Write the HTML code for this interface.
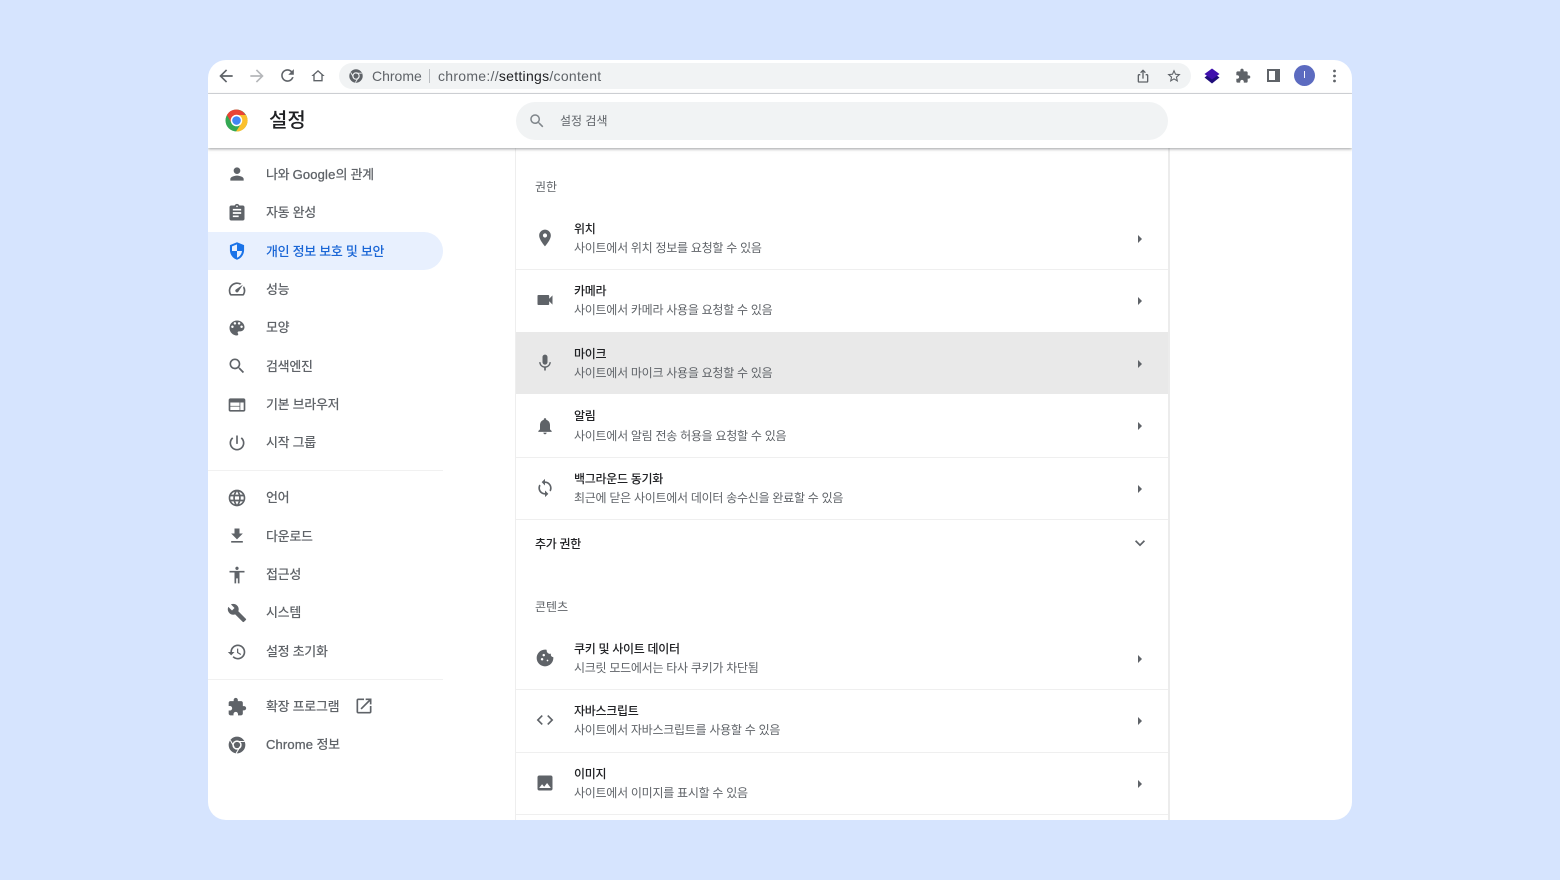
<!DOCTYPE html>
<html lang="ko"><head><meta charset="utf-8"><title>설정</title>
<style>
*{box-sizing:border-box;margin:0;padding:0}
html,body{width:1560px;height:880px;overflow:hidden;background:#d6e4fe}
body{font-family:"Liberation Sans","Noto Sans CJK KR",sans-serif;position:relative}
#w{position:absolute;left:208px;top:60px;width:1144px;height:760px;background:#fff;border-radius:18px;overflow:hidden;filter:blur(.3px)}
.a{position:absolute}
.t{position:absolute;line-height:20px;height:20px;white-space:nowrap}
svg{position:absolute;display:block}
.i{width:20px;height:20px;fill:#5f6368}
.s{font-size:13px;color:#5f6368;left:58px;font-weight:500;letter-spacing:-.3px;margin-top:1px}
.s b{font-weight:400;letter-spacing:.15px;-webkit-text-stroke:.3px currentColor}
.h{font-size:12px;color:#5f6368;left:327px;margin-top:1px}
.n{font-size:12px;color:#202124;left:366px;font-weight:500;letter-spacing:-.3px;margin-top:1px}
.d{font-size:12px;color:#5f6368;left:366px;letter-spacing:-.27px;margin-top:1px}
.l{position:absolute;left:308px;width:652px;height:1px;background:#efefef}
.ar{position:absolute;left:930px;width:4px;height:8px;background:#5f6368;clip-path:polygon(0 0,100% 50%,0 100%)}
.b{width:16px;height:16px;fill:#5f6368}
</style></head><body>
<div id="w">
<!-- toolbar -->
<svg style="left:8px;top:6px;width:20px;height:20px;fill:#5f6368" viewBox="0 0 24 24"><path d="M20 11H7.830l5.590-5.590L12 4l-8 8 8 8 1.410-1.410L7.830 13H20v-2z"/></svg>
<svg style="left:39px;top:6px;width:20px;height:20px;fill:#b5b7ba" viewBox="0 0 24 24"><path d="M12 4l-1.410 1.410L16.170 11H4v2h12.170l-5.580 5.590L12 20l8-8z"/></svg>
<svg style="left:70px;top:6px;width:19px;height:19px;fill:#5f6368" viewBox="0 0 24 24"><path d="M17.650 6.350C16.200 4.900 14.210 4 12 4c-4.420 0-7.990 3.580-7.990 8s3.570 8 7.990 8c3.730 0 6.840-2.550 7.730-6h-2.080c-.82 2.330-3.040 4-5.650 4-3.310 0-6-2.690-6-6s2.690-6 6-6c1.660 0 3.140.69 4.220 1.780L13 11h7V4l-2.350 2.350z"/></svg>
<svg style="left:102px;top:8px;width:16px;height:16px;fill:#5f6368" viewBox="0 0 24 24"><path d="M12 5.690l5 4.500V18H7v-7.810l5-4.500M12 3L2 12h3v8h14v-8h3L12 3z"/></svg>
<div class="a" style="left:131px;top:3px;width:852px;height:26px;background:#f1f3f4;border-radius:13px"></div>
<svg style="left:141px;top:9px;width:14px;height:14px" viewBox="0 0 24 24"><circle cx="12" cy="12" r="11.500" fill="#5f6368"/><circle cx="12" cy="12" r="6.400" fill="#f1f3f4"/><circle cx="12" cy="12" r="4.400" fill="#5f6368"/><path d="M12 7.200H22M7.800 14.400 2.800 5.800M16.200 14.400 11 23" stroke="#f1f3f4" stroke-width="1.500" fill="none"/></svg>
<div class="t" style="left:164px;top:6px;font-size:14px;color:#5f6368">Chrome</div>
<div class="a" style="left:221px;top:9px;width:1px;height:14px;background:#b9bcc0"></div>
<div class="t" style="left:230px;top:6px;font-size:14px;color:#5f6368;letter-spacing:.28px">chrome://<span style="color:#202124">settings</span>/content</div>
<svg class="b" style="left:927px;top:8px" viewBox="0 0 24 24"><path d="M12 2 7.700 6.300l1.400 1.400L11 5.800V16h2V5.800l1.900 1.900 1.400-1.400zM8 9H6c-1.100 0-2 .9-2 2v9c0 1.100.9 2 2 2h12c1.100 0 2-.9 2-2v-9c0-1.100-.9-2-2-2h-2v2h2v9H6v-9h2z"/></svg>
<svg class="b" style="left:958px;top:8px" viewBox="0 0 24 24"><path d="M22 9.240l-7.190-.62L12 2 9.190 8.630 2 9.240l5.460 4.730L5.820 21 12 17.270 18.180 21l-1.630-7.030L22 9.240zM12 15.400l-3.760 2.270 1-4.280-3.320-2.880 4.380-.38L12 6.100l1.710 4.040 4.380.38-3.320 2.880 1 4.280L12 15.400z"/></svg>
<svg style="left:996px;top:8px;width:16px;height:16px" viewBox="0 0 16 16"><path d="M.5 9.500 8 15.500l7.500-6L8 4z" fill="#1f0d7a"/><path d="M.5 6 8 .5 15.500 6 8 11.500z" fill="#3f10ad"/></svg>
<svg class="b" style="left:1027px;top:8px" viewBox="0 0 24 24"><path d="M20.500 11H19V7c0-1.100-.9-2-2-2h-4V3.500C13 2.120 11.880 1 10.500 1S8 2.120 8 3.500V5H4c-1.100 0-1.990.9-1.990 2v3.800H3.500c1.490 0 2.700 1.210 2.700 2.700s-1.210 2.700-2.700 2.700H2V20c0 1.100.9 2 2 2h3.800v-1.500c0-1.490 1.210-2.700 2.700-2.700 1.490 0 2.700 1.210 2.700 2.700V22H17c1.100 0 2-.9 2-2v-4h1.500c1.380 0 2.500-1.120 2.500-2.500S21.880 11 20.500 11z"/></svg>
<div class="a" style="left:1059px;top:9px;width:13px;height:13px;border:2px solid #5f6368;border-right-width:5px"></div>
<div class="a" style="left:1086px;top:5px;width:21px;height:21px;border-radius:50%;background:#5c6bc0;color:#fff;font-size:10px;line-height:21px;text-align:center">I</div>
<svg style="left:1124px;top:8px;width:5px;height:16px" viewBox="0 0 5 16" fill="#5f6368"><circle cx="2.500" cy="3" r="1.400"/><circle cx="2.500" cy="8" r="1.400"/><circle cx="2.500" cy="13" r="1.400"/></svg>
<div class="a" style="left:0;top:33px;width:1144px;height:1px;background:#dadce0"></div>

<!-- main card -->
<div class="a" style="left:306.500px;top:88px;width:1.500px;height:672px;background:#eeeeee"></div>
<div class="a" style="left:960px;top:88px;width:2px;height:672px;background:#ececec"></div>
<div class="a" style="left:308px;top:272px;width:652px;height:62px;background:#e9e9e9"></div>

<!-- header -->
<div class="a" style="left:0;top:34px;width:1144px;height:54px;background:#fff;box-shadow:0 1px 3px rgba(60,64,67,.5)"></div>
<svg style="left:17px;top:49px;width:23px;height:23px" viewBox="0 0 24 24"><circle cx="12" cy="12" r="11.500" fill="#34a853"/><path d="M12 .5A11.500 11.500 0 0 0 2 6.300L7 15 12 7h10A11.500 11.500 0 0 0 12 .5z" fill="#ea4335"/><path d="M22 6.300H12l5 8.700-5.500 8.500A11.500 11.500 0 0 0 22 6.300z" fill="#fbc02d"/><circle cx="12" cy="12" r="6" fill="#fff"/><circle cx="12" cy="12" r="4.500" fill="#4285f4"/></svg>
<div class="t" style="left:61px;top:47px;height:28px;line-height:28px;font-size:20px;color:#202124;font-weight:500">설정</div>
<div class="a" style="left:308px;top:42px;width:652px;height:38px;background:#f1f3f4;border-radius:19px"></div>
<svg style="left:319.500px;top:51.500px;width:18px;height:18px;fill:#80868b" viewBox="0 0 24 24"><path d="M15.500 14h-.79l-.28-.27C15.410 12.590 16 11.110 16 9.500 16 5.910 13.090 3 9.500 3S3 5.910 3 9.500 5.910 16 9.500 16c1.610 0 3.090-.59 4.230-1.570l.27.28v.79l5 4.990L20.490 19l-4.990-5zm-6 0C7.010 14 5 11.990 5 9.500S7.010 5 9.500 5 14 7.010 14 9.500 11.990 14 9.500 14z"/></svg>
<div class="t" style="left:352px;top:51px;font-size:12px;color:#5f6368">설정 검색</div>

<!-- sidebar -->
<div class="a" style="left:0;top:172px;width:235px;height:38px;background:#e8f0fe;border-radius:0 19px 19px 0"></div>
<div class="a" style="left:0;top:410px;width:235px;height:1px;background:#f1f1f1"></div>
<div class="a" style="left:0;top:619px;width:235px;height:1px;background:#f1f1f1"></div>

<svg class="i" style="left:19px;top:104px" viewBox="0 0 24 24"><path d="M12 12c2.210 0 4-1.790 4-4s-1.790-4-4-4-4 1.790-4 4 1.790 4 4 4zm0 2c-2.670 0-8 1.340-8 4v2h16v-2c0-2.660-5.330-4-8-4z"/></svg>
<div class="t s" style="top:104px">나와 <b>Google</b>의 관계</div>
<svg class="i" style="left:19px;top:143px" viewBox="0 0 24 24"><path d="M19 3h-4.180C14.400 1.840 13.300 1 12 1c-1.300 0-2.400.84-2.820 2H5c-1.100 0-2 .9-2 2v14c0 1.100.9 2 2 2h14c1.100 0 2-.9 2-2V5c0-1.100-.9-2-2-2zm-7 0c.55 0 1 .45 1 1s-.45 1-1 1-1-.45-1-1 .45-1 1-1zm2 14H7v-2h7v2zm3-4H7v-2h10v2zm0-4H7V7h10v2z"/></svg>
<div class="t s" style="top:142px">자동 완성</div>
<svg class="i" style="left:19px;top:181px;fill:#1a73e8" viewBox="0 0 24 24"><path d="M12 1.500 3.500 5v6c0 5.200 3.600 10 8.500 11.500 4.900-1.500 8.500-6.300 8.500-11.500V5z"/><path d="M12 4v8H6V6.400zM12 12h6c-.4 3.600-2.800 6.900-6 8.100z" fill="#e8f0fe"/></svg>
<div class="t s" style="top:181px;color:#1a66d6">개인 정보 보호 및 보안</div>
<svg class="i" style="left:19px;top:219px" viewBox="0 0 24 24"><path d="M20.380 8.570l-1.230 1.850a8 8 0 0 1-.22 7.580H5.070A8 8 0 0 1 15.580 6.850l1.850-1.230A10 10 0 0 0 3.350 19a2 2 0 0 0 1.720 1h13.850a2 2 0 0 0 1.740-1 10 10 0 0 0-.27-10.440zm-9.790 6.840a2 2 0 0 0 2.830 0l5.660-8.490-8.490 5.660a2 2 0 0 0 0 2.830z"/></svg>
<div class="t s" style="top:219px">성능</div>
<svg class="i" style="left:19px;top:258px" viewBox="0 0 24 24"><path d="M12 3c-4.970 0-9 4.030-9 9s4.030 9 9 9c.83 0 1.500-.67 1.500-1.500 0-.39-.15-.74-.39-1.010-.23-.26-.38-.61-.38-.99 0-.83.67-1.500 1.500-1.500H16c2.760 0 5-2.240 5-5 0-4.420-4.030-8-9-8zm-5.500 9c-.83 0-1.500-.67-1.500-1.500S5.670 9 6.500 9 8 9.670 8 10.500 7.330 12 6.500 12zm3-4C8.670 8 8 7.330 8 6.500S8.670 5 9.500 5s1.500.67 1.500 1.500S10.330 8 9.500 8zm5 0c-.83 0-1.500-.67-1.500-1.500S13.670 5 14.500 5s1.500.67 1.500 1.500S15.330 8 14.500 8zm3 4c-.83 0-1.500-.67-1.500-1.500S16.670 9 17.500 9s1.500.67 1.500 1.500-.67 1.500-1.500 1.500z"/></svg>
<div class="t s" style="top:257px">모양</div>
<svg class="i" style="left:19px;top:296px" viewBox="0 0 24 24"><path d="M15.500 14h-.79l-.28-.27C15.410 12.590 16 11.110 16 9.500 16 5.910 13.090 3 9.500 3S3 5.910 3 9.500 5.910 16 9.500 16c1.610 0 3.090-.59 4.230-1.570l.27.28v.79l5 4.990L20.490 19l-4.990-5zm-6 0C7.010 14 5 11.990 5 9.500S7.010 5 9.500 5 14 7.010 14 9.500 11.990 14 9.500 14z"/></svg>
<div class="t s" style="top:296px">검색엔진</div>
<svg class="i" style="left:19px;top:335px" viewBox="0 0 24 24"><path d="M20 4H4c-1.100 0-2 .9-2 2l-.01 12c0 1.100.9 2 2 2H20c1.100 0 2-.9 2-2V6c0-1.100-.9-2-2-2zm-5 14H4v-4h11v4zm0-5H4V9h11v4zm5 5h-4V9h4v9z"/></svg>
<div class="t s" style="top:334px">기본 브라우저</div>
<svg class="i" style="left:19px;top:373px" viewBox="0 0 24 24"><path d="M13 3h-2v10h2V3zm4.830 2.170l-1.420 1.420C17.990 7.860 19 9.810 19 12c0 3.870-3.130 7-7 7s-7-3.130-7-7c0-2.190 1.010-4.140 2.580-5.420L6.170 5.170C4.230 6.820 3 9.260 3 12c0 4.970 4.030 9 9 9s9-4.030 9-9c0-2.740-1.230-5.180-3.170-6.830z"/></svg>
<div class="t s" style="top:372px">시작 그룹</div>
<svg class="i" style="left:19px;top:428px" viewBox="0 0 24 24"><path d="M11.990 2C6.470 2 2 6.480 2 12s4.470 10 9.990 10C17.520 22 22 17.520 22 12S17.520 2 11.990 2zm6.930 6h-2.950c-.32-1.250-.78-2.450-1.380-3.560 1.840.63 3.370 1.910 4.330 3.560zM12 4.040c.83 1.200 1.480 2.530 1.910 3.960h-3.820c.43-1.430 1.080-2.760 1.910-3.960zM4.260 14C4.100 13.360 4 12.690 4 12s.1-1.360.26-2h3.380c-.08.66-.14 1.320-.14 2 0 .68.06 1.340.14 2H4.260zm.82 2h2.950c.32 1.250.78 2.450 1.380 3.560-1.840-.63-3.370-1.900-4.330-3.560zm2.950-8H5.080c.96-1.660 2.490-2.930 4.330-3.560C8.810 5.550 8.350 6.750 8.030 8zM12 19.960c-.83-1.200-1.480-2.530-1.910-3.960h3.820c-.43 1.430-1.080 2.760-1.910 3.960zM14.340 14H9.660c-.09-.66-.16-1.320-.16-2 0-.68.07-1.350.16-2h4.680c.09.65.16 1.320.16 2 0 .68-.07 1.340-.16 2zm.25 5.560c.6-1.110 1.060-2.310 1.380-3.560h2.950c-.96 1.650-2.490 2.930-4.330 3.560zM16.360 14c.08-.66.14-1.320.14-2 0-.68-.06-1.340-.14-2h3.380c.16.64.26 1.310.26 2s-.1 1.360-.26 2h-3.380z"/></svg>
<div class="t s" style="top:427px">언어</div>
<svg class="i" style="left:19px;top:466px" viewBox="0 0 24 24"><path d="M19 9h-4V3H9v6H5l7 7 7-7zM5 18v2h14v-2H5z"/></svg>
<div class="t s" style="top:466px">다운로드</div>
<svg class="i" style="left:19px;top:505px" viewBox="0 0 24 24"><path d="M12 2c1.100 0 2 .9 2 2s-.9 2-2 2-2-.9-2-2 .9-2 2-2zm9 7h-6v13h-2v-6h-2v6H9V9H3V7h18v2z"/></svg>
<div class="t s" style="top:504px">접근성</div>
<svg class="i" style="left:19px;top:543px" viewBox="0 0 24 24"><path d="M22.700 19l-9.100-9.100c.9-2.300.4-5-1.500-6.900-2-2-5-2.400-7.400-1.300L9 6 6 9 1.600 4.700C.4 7.100.9 10.100 2.900 12.100c1.900 1.900 4.600 2.400 6.900 1.500l9.100 9.100c.4.4 1 .4 1.400 0l2.300-2.300c.5-.4.5-1.100.1-1.400z"/></svg>
<div class="t s" style="top:542px">시스템</div>
<svg class="i" style="left:19px;top:582px" viewBox="0 0 24 24"><path d="M13 3c-4.970 0-9 4.030-9 9H1l3.890 3.890.07.14L9 12H6c0-3.870 3.130-7 7-7s7 3.130 7 7-3.130 7-7 7c-1.930 0-3.680-.79-4.940-2.060l-1.420 1.420C8.270 19.990 10.510 21 13 21c4.970 0 9-4.030 9-9s-4.030-9-9-9zm-1 5v5l4.280 2.540.72-1.210-3.500-2.080V8H12z"/></svg>
<div class="t s" style="top:581px">설정 초기화</div>
<svg class="i" style="left:19px;top:637px" viewBox="0 0 24 24"><path d="M20.500 11H19V7c0-1.100-.9-2-2-2h-4V3.500C13 2.120 11.880 1 10.500 1S8 2.120 8 3.500V5H4c-1.100 0-1.990.9-1.990 2v3.800H3.500c1.490 0 2.700 1.210 2.700 2.700s-1.210 2.700-2.700 2.700H2V20c0 1.100.9 2 2 2h3.800v-1.500c0-1.490 1.210-2.700 2.700-2.700 1.490 0 2.700 1.210 2.700 2.700V22H17c1.100 0 2-.9 2-2v-4h1.500c1.380 0 2.500-1.120 2.500-2.500S21.880 11 20.500 11z"/></svg>
<div class="t s" style="top:636px">확장 프로그램</div>
<svg class="i" style="left:146px;top:636px" viewBox="0 0 24 24"><path d="M19 19H5V5h7V3H5c-1.110 0-2 .9-2 2v14c0 1.100.89 2 2 2h14c1.100 0 2-.9 2-2v-7h-2v7zM14 3v2h3.590l-9.830 9.830 1.410 1.410L19 6.410V10h2V3h-7z"/></svg>
<svg class="i" style="left:19px;top:675px" viewBox="0 0 24 24"><circle cx="12" cy="12" r="10"/><circle cx="12" cy="12" r="5.600" fill="#fff"/><circle cx="12" cy="12" r="3.800"/><path d="M12 7.800H21M8.400 14 4 6.300M15.600 14 11 22" stroke="#fff" stroke-width="1.300" fill="none"/></svg>
<div class="t s" style="top:674px"><b>Chrome</b> 정보</div>

<!-- section 1 -->
<div class="t h" style="left:327px;top:116px">권한</div>
<svg class="i" style="left:327px;top:168px" viewBox="0 0 24 24"><path d="M12 2C8.130 2 5 5.130 5 9c0 5.250 7 13 7 13s7-7.750 7-13c0-3.870-3.130-7-7-7zm0 9.500c-1.380 0-2.500-1.120-2.500-2.500s1.120-2.500 2.500-2.500 2.500 1.120 2.500 2.500-1.120 2.500-2.500 2.500z"/></svg>
<div class="t n" style="top:158px">위치</div><div class="t d" style="top:177px">사이트에서 위치 정보를 요청할 수 있음</div><div class="ar" style="top:175px"></div>
<div class="l" style="top:209px"></div>
<svg class="i" style="left:327px;top:230px" viewBox="0 0 24 24"><path d="M17 10.500V7c0-.55-.45-1-1-1H4c-.55 0-1 .45-1 1v10c0 .55.45 1 1 1h12c.55 0 1-.45 1-1v-3.500l4 4v-11l-4 4z"/></svg>
<div class="t n" style="top:220px">카메라</div><div class="t d" style="top:239px">사이트에서 카메라 사용을 요청할 수 있음</div><div class="ar" style="top:237px"></div>
<svg class="i" style="left:327px;top:293px" viewBox="0 0 24 24"><path d="M12 14c1.660 0 2.990-1.340 2.990-3L15 5c0-1.660-1.340-3-3-3S9 3.340 9 5v6c0 1.660 1.340 3 3 3zm5.300-3c0 3-2.540 5.100-5.300 5.100S6.700 14 6.700 11H5c0 3.410 2.720 6.230 6 6.720V21h2v-3.280c3.280-.48 6-3.300 6-6.720h-1.700z"/></svg>
<div class="t n" style="top:283px">마이크</div><div class="t d" style="top:302px">사이트에서 마이크 사용을 요청할 수 있음</div><div class="ar" style="top:300px"></div>
<svg class="i" style="left:327px;top:356px" viewBox="0 0 24 24"><path d="M12 22c1.100 0 2-.9 2-2h-4c0 1.100.89 2 2 2zm6-6v-5c0-3.070-1.640-5.640-4.500-6.320V4c0-.83-.67-1.500-1.500-1.500s-1.500.67-1.500 1.500v.68C7.630 5.360 6 7.920 6 11v5l-2 2v1h16v-1l-2-2z"/></svg>
<div class="t n" style="top:345px">알림</div><div class="t d" style="top:365px">사이트에서 알림 전송 허용을 요청할 수 있음</div><div class="ar" style="top:362px"></div>
<div class="l" style="top:397px"></div>
<svg class="i" style="left:327px;top:418px" viewBox="0 0 24 24"><path d="M12 4V1L8 5l4 4V6c3.310 0 6 2.690 6 6 0 1.010-.25 1.970-.7 2.800l1.460 1.460C19.540 15.030 20 13.570 20 12c0-4.420-3.580-8-8-8zm0 14c-3.310 0-6-2.690-6-6 0-1.010.25-1.970.7-2.800L5.240 7.740C4.460 8.970 4 10.430 4 12c0 4.420 3.580 8 8 8v3l4-4-4-4v3z"/></svg>
<div class="t n" style="top:408px">백그라운드 동기화</div><div class="t d" style="top:427px">최근에 닫은 사이트에서 데이터 송수신을 완료할 수 있음</div><div class="ar" style="top:425px"></div>
<div class="l" style="top:459px"></div>
<div class="t n" style="left:327px;top:473px">추가 권한</div>
<svg class="i" style="left:922px;top:473px" viewBox="0 0 24 24"><path d="M16.590 8.590L12 13.170 7.410 8.590 6 10l6 6 6-6z"/></svg>

<!-- section 2 -->
<div class="t h" style="top:536px">콘텐츠</div>
<svg class="i" style="left:327px;top:588px" viewBox="0 0 24 24"><path d="M21.950 10.990c-1.790-.03-3.700-1.950-2.680-4.220-2.970 1-5.780-1.590-5.190-4.560C7.100.74 2 6.410 2 12c0 5.520 4.480 10 10 10 5.890 0 10.540-5.080 9.950-11.010zM8.500 15c-.83 0-1.500-.67-1.500-1.500S7.670 12 8.500 12s1.500.67 1.500 1.500S9.330 15 8.500 15zm2-5C9.670 10 9 9.330 9 8.500S9.670 7 10.500 7s1.500.67 1.500 1.500-.67 1.500-1.500 1.500zm4.500 6c-.55 0-1-.45-1-1s.45-1 1-1 1 .45 1 1-.45 1-1 1z"/></svg>
<div class="t n" style="top:578px">쿠키 및 사이트 데이터</div><div class="t d" style="top:597px">시크릿 모드에서는 타사 쿠키가 차단됨</div><div class="ar" style="top:595px"></div>
<div class="l" style="top:629px"></div>
<svg class="i" style="left:327px;top:650px" viewBox="0 0 24 24"><path d="M9.400 16.600L4.800 12l4.600-4.600L8 6l-6 6 6 6 1.400-1.400zm5.200 0l4.600-4.600-4.600-4.600L16 6l6 6-6 6-1.400-1.400z"/></svg>
<div class="t n" style="top:640px">자바스크립트</div><div class="t d" style="top:659px">사이트에서 자바스크립트를 사용할 수 있음</div><div class="ar" style="top:657px"></div>
<div class="l" style="top:692px"></div>
<svg class="i" style="left:327px;top:713px" viewBox="0 0 24 24"><path d="M21 19V5c0-1.100-.9-2-2-2H5c-1.100 0-2 .9-2 2v14c0 1.100.9 2 2 2h14c1.100 0 2-.9 2-2zM8.500 13.500l2.500 3.010L14.500 12l4.500 6H5l3.500-4.500z"/></svg>
<div class="t n" style="top:703px">이미지</div><div class="t d" style="top:722px">사이트에서 이미지를 표시할 수 있음</div><div class="ar" style="top:720px"></div>
<div class="l" style="top:754px"></div>
</div>
</body></html>
